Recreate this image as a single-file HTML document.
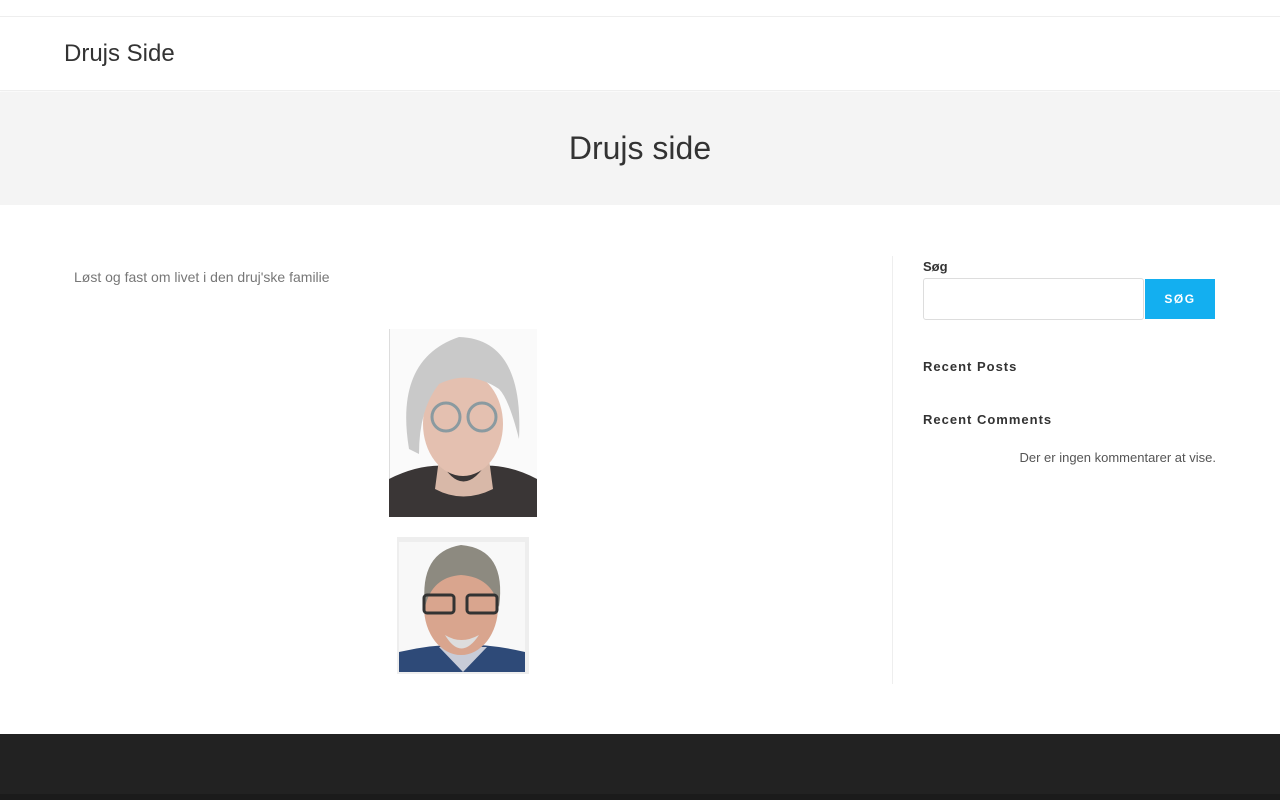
<!DOCTYPE html>
<html><head><meta charset="utf-8">
<style>
*{box-sizing:border-box;margin:0;padding:0}
body{width:1280px;height:800px;overflow:hidden;background:#fff;font-family:"Liberation Sans",sans-serif;position:relative}
.topbar{height:17px;border-bottom:1px solid #eee}
.header{height:74px;border-bottom:1px solid #eee;box-shadow:0 1px 2px rgba(0,0,0,.03)}
.logo{position:absolute;left:64px;top:40px;font-size:24px;color:#333}
.title{position:absolute;top:92px;left:0;width:1280px;height:113px;background:#f4f4f4;text-align:center;font-size:32px;color:#333;line-height:113px}
.intro{position:absolute;left:74px;top:269px;font-size:14px;color:#777}
.divider{position:absolute;left:892px;top:256px;width:1px;height:428px;background:#eee}
.lbl{position:absolute;left:923px;top:259px;font-size:13px;font-weight:bold;color:#333}
.inp{position:absolute;left:923px;top:278px;width:221px;height:42px;border:1px solid #ddd;border-radius:3px}
.btn{position:absolute;left:1145px;top:279px;width:70px;height:40px;background:#13aff0;color:#fff;font-size:12px;font-weight:bold;letter-spacing:1.5px;text-align:center;line-height:40px}
.h{position:absolute;left:923px;font-size:13px;font-weight:bold;color:#333;letter-spacing:1px}
.nc{position:absolute;right:64px;top:450px;font-size:13px;color:#555}
.footer{position:absolute;left:0;top:734px;width:1280px;height:66px;background:#222}
.footer2{position:absolute;left:0;top:794px;width:1280px;height:6px;background:#1b1b1b}
</style></head><body>
<div class="topbar"></div>
<div class="header"></div>
<div class="logo">Drujs Side</div>
<div class="title">Drujs side</div>
<div class="intro">Løst og fast om livet i den druj'ske familie</div>

<svg style="position:absolute;left:389px;top:329px" width="148" height="188" viewBox="0 0 148 188">
<rect width="148" height="188" fill="#fafafa"/>
<line x1="0.5" y1="0" x2="0.5" y2="188" stroke="#ddd"/>
<path d="M0 150 Q40 130 74 140 Q110 130 148 150 V188 H0Z" fill="#3a3636"/>
<path d="M50 130 Q74 175 100 130 L104 160 Q74 175 46 160Z" fill="#d8b8a8"/>
<ellipse cx="74" cy="95" rx="40" ry="52" fill="#e4c0b0"/>
<path d="M20 120 Q5 30 70 8 Q135 10 130 110 Q120 70 110 60 Q80 40 50 55 Q30 80 30 125Z" fill="#c9c9c9"/>
<circle cx="57" cy="88" r="14" fill="none" stroke="#8a9aa0" stroke-width="3"/>
<circle cx="93" cy="88" r="14" fill="none" stroke="#8a9aa0" stroke-width="3"/>
</svg>

<svg style="position:absolute;left:397px;top:537px" width="132" height="137" viewBox="0 0 132 137">
<rect width="132" height="137" fill="#eee"/>
<rect x="2" y="5" width="126" height="130" fill="#f8f8f8"/>
<path d="M2 115 Q66 100 128 115 V135 H2Z" fill="#2e4a78"/>
<path d="M42 110 L66 135 L90 110Z" fill="#c8ccd8"/>
<ellipse cx="64" cy="70" rx="37" ry="48" fill="#d9a58e"/>
<path d="M28 70 Q22 15 64 8 Q110 12 102 70 Q95 40 64 38 Q35 40 28 70Z" fill="#8d8a80"/>
<path d="M48 98 Q64 125 82 98 Q64 108 48 98Z" fill="#ddd"/>
<rect x="27" y="58" width="30" height="18" rx="3" fill="none" stroke="#333" stroke-width="3"/>
<rect x="70" y="58" width="30" height="18" rx="3" fill="none" stroke="#333" stroke-width="3"/>
</svg>

<div class="divider"></div>
<div class="lbl">Søg</div>
<div class="inp"></div>
<div class="btn">SØG</div>
<div class="h" style="top:359px">Recent Posts</div>
<div class="h" style="top:412px">Recent Comments</div>
<div class="nc">Der er ingen kommentarer at vise.</div>
<div class="footer"></div>
<div class="footer2"></div>
</body></html>
